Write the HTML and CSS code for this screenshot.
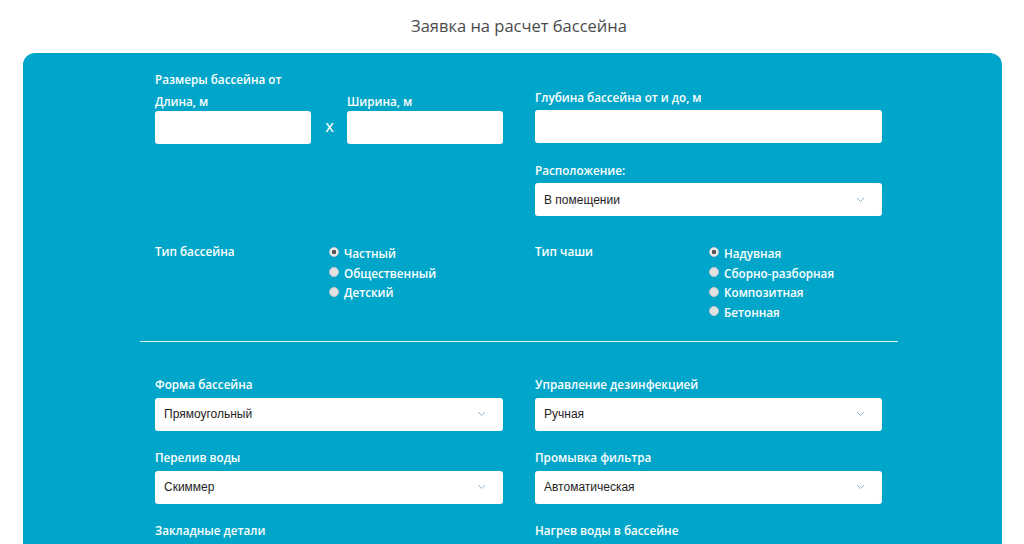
FILE: index.html
```html
<!DOCTYPE html>
<html lang="ru">
<head>
<meta charset="utf-8">
<title>Заявка на расчет бассейна</title>
<link rel="stylesheet" href="styles.css">
</head>
<body>
<h1 class="title">Заявка на расчет бассейна</h1>
<div class="panel">
  <div class="section top">
    <div class="col">
      <div class="label">Размеры бассейна от</div>
      <div class="dims">
        <div class="dim">
          <div class="label sub">Длина, м</div>
          <div class="input"></div>
        </div>
        <div class="times">X</div>
        <div class="dim">
          <div class="label sub">Ширина, м</div>
          <div class="input"></div>
        </div>
      </div>
    </div>
    <div class="col col-right">
      <div class="label">Глубина бассейна от и до, м</div>
      <div class="input"></div>
      <div class="label gap">Расположение:</div>
      <div class="select"><span>В помещении</span><svg class="chev" width="9" height="6" viewBox="0 0 9 6"><polyline points="1,1 4.5,4.5 8,1" fill="none" stroke="#8fb6cc" stroke-width="1"/></svg></div>
    </div>
    <div class="col radio-group">
      <div class="label">Тип бассейна</div>
      <ul class="radios">
        <li class="radio checked"><i></i>Частный</li>
        <li class="radio"><i></i>Общественный</li>
        <li class="radio"><i></i>Детский</li>
      </ul>
    </div>
    <div class="col radio-group">
      <div class="label">Тип чаши</div>
      <ul class="radios">
        <li class="radio checked"><i></i>Надувная</li>
        <li class="radio"><i></i>Сборно-разборная</li>
        <li class="radio"><i></i>Композитная</li>
        <li class="radio"><i></i>Бетонная</li>
      </ul>
    </div>
  </div>
  <hr class="divider">
  <div class="section fields">
    <div class="field">
      <div class="label">Форма бассейна</div>
      <div class="select"><span>Прямоугольный</span><svg class="chev" width="9" height="6" viewBox="0 0 9 6"><polyline points="1,1 4.5,4.5 8,1" fill="none" stroke="#8fb6cc" stroke-width="1"/></svg></div>
    </div>
    <div class="field">
      <div class="label">Управление дезинфекцией</div>
      <div class="select"><span>Ручная</span><svg class="chev" width="9" height="6" viewBox="0 0 9 6"><polyline points="1,1 4.5,4.5 8,1" fill="none" stroke="#8fb6cc" stroke-width="1"/></svg></div>
    </div>
    <div class="field">
      <div class="label">Перелив воды</div>
      <div class="select"><span>Скиммер</span><svg class="chev" width="9" height="6" viewBox="0 0 9 6"><polyline points="1,1 4.5,4.5 8,1" fill="none" stroke="#8fb6cc" stroke-width="1"/></svg></div>
    </div>
    <div class="field">
      <div class="label">Промывка фильтра</div>
      <div class="select"><span>Автоматическая</span><svg class="chev" width="9" height="6" viewBox="0 0 9 6"><polyline points="1,1 4.5,4.5 8,1" fill="none" stroke="#8fb6cc" stroke-width="1"/></svg></div>
    </div>
    <div class="field">
      <div class="label">Закладные детали</div>
      <div class="select"></div>
    </div>
    <div class="field">
      <div class="label">Нагрев воды в бассейне</div>
      <div class="select"></div>
    </div>
  </div>
</div>
</body>
</html>
```

FILE: styles.css
```css
html, body {
  margin: 0;
  padding: 0;
  background: #ffffff;
}
body {
  font-family: "Open Sans", "Liberation Sans", sans-serif;
  overflow: hidden;
  height: 544px;
}
.title {
  margin: 0;
  height: 53px;
  line-height: 51px;
  text-align: center;
  font-size: 16.5px;
  font-weight: 400;
  color: #4b4b4b;
  padding-left: 14px;
}
.panel {
  margin: 0 22px 0 23px;
  background: #00a6c9;
  border-radius: 12px 12px 0 0;
  padding: 18px 104px 40px 117px;
  color: #ffffff;
}
.section {
  padding: 0 16px 0 15px;
  display: grid;
  grid-template-columns: 348px 347px;
  column-gap: 32px;
}
.label {
  font-size: 11.7px;
  font-weight: 600;
  line-height: 16px;
  color: #ffffff;
}
.dims {
  display: grid;
  grid-template-columns: 156px 36px 156px;
  margin-top: 6px;
}
.label.sub {
  margin-bottom: 2px;
}
.times {
  align-self: end;
  text-align: center;
  font-size: 13px;
  font-weight: 600;
  line-height: 33px;
  padding-left: 1px;
}
.input {
  height: 33px;
  background: #ffffff;
  border-radius: 3px;
}
.col-right {
  padding-top: 18px;
}
.col-right .label {
  margin-bottom: 5px;
}
.col-right .label.gap {
  margin-top: 19px;
}
.select {
  height: 33px;
  background: #ffffff;
  border-radius: 3px;
  display: flex;
  align-items: center;
  justify-content: space-between;
  padding: 0 17px 0 9px;
  font-family: "Liberation Sans", Arial, sans-serif;
  font-size: 12px;
  color: #1e1e1e;
}
.chev {
  display: block;
}
.radio-group {
  margin-top: 27px;
  display: grid;
  grid-template-columns: 174px 1fr;
}
.radios {
  list-style: none;
  margin: 0;
  padding: 0;
}
.radio {
  display: flex;
  align-items: center;
  font-size: 11.7px;
  font-weight: 600;
  line-height: 20px;
  height: 19.7px;
}
.radio i {
  width: 8px;
  height: 8px;
  border-radius: 50%;
  background: #e2e2e2;
  border: 1px solid #c8c8c8;
  margin-right: 5px;
  margin-top: -1px;
  box-sizing: content-box;
}
.radio.checked i {
  background: radial-gradient(circle, #555 0 2px, #f0f0f0 2.6px);
}
.divider {
  margin: 19px 0 0 0;
  width: 758px;
  border: 0;
  border-top: 1px solid #d9f4fa;
  height: 0;
}
.fields {
  margin-top: 34px;
  row-gap: 18px;
}
.fields .label {
  margin-bottom: 6px;
}
```
